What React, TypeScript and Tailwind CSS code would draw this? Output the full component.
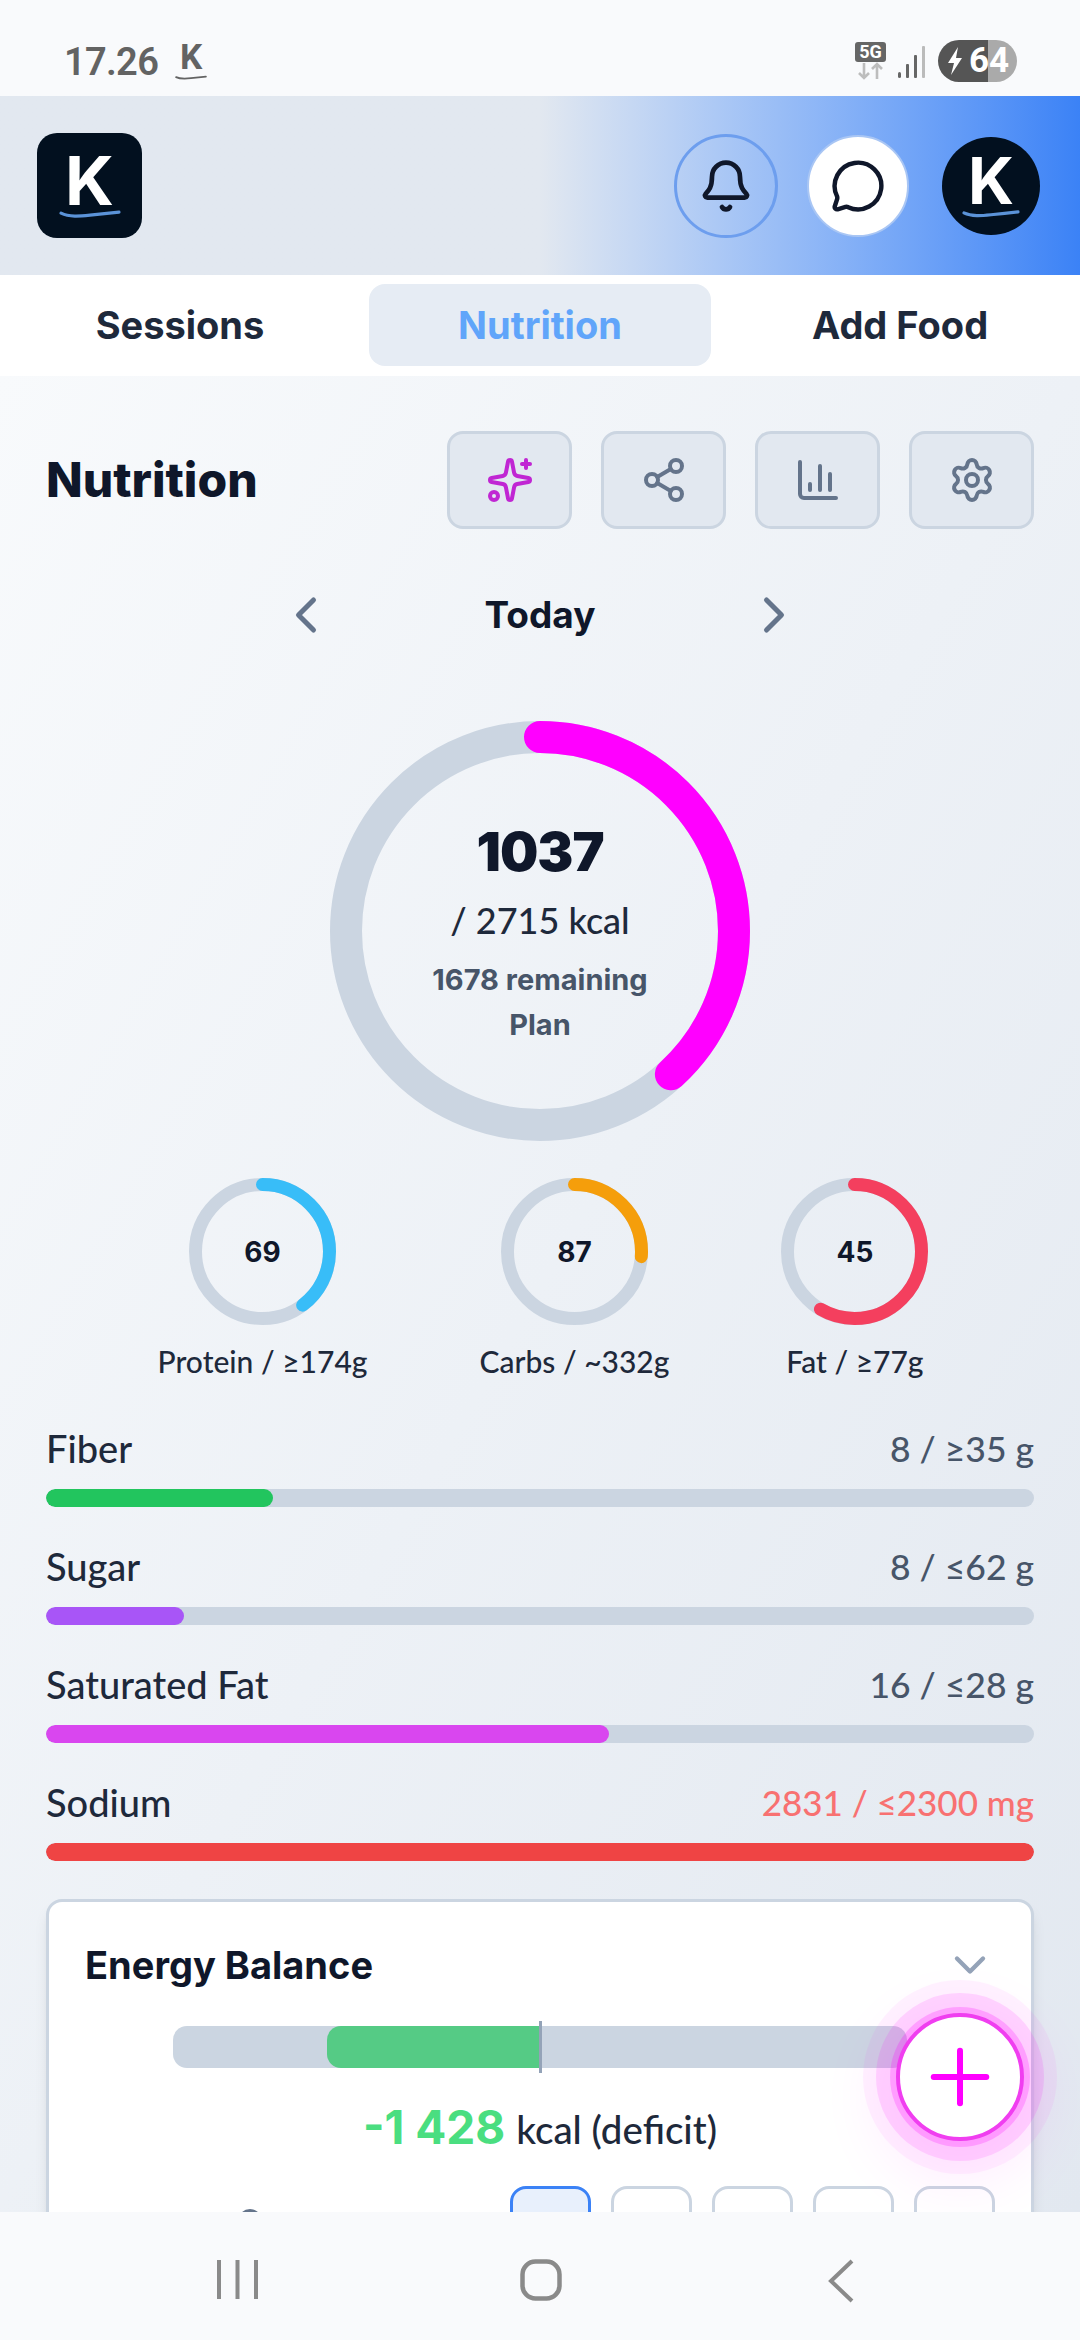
import { Bell, MessageCircle, Sparkles, Share2, ChartColumn, Settings, ChevronLeft, ChevronRight, ChevronDown, Plus } from "lucide-react";

const head = "font-['Inter','Liberation_Sans',sans-serif]";
const body = "font-['Lato','Liberation_Sans',sans-serif]";

function Ring({ size, stroke, value, color }: { size: number; stroke: number; value: number; color: string }) {
  const r = (size - stroke) / 2;
  const c = 2 * Math.PI * r;
  return (
    <svg width={size} height={size} className="absolute inset-0 -rotate-90">
      <circle cx={size / 2} cy={size / 2} r={r} fill="none" stroke="#cbd5e1" strokeWidth={stroke} />
      <circle
        cx={size / 2}
        cy={size / 2}
        r={r}
        fill="none"
        stroke={color}
        strokeWidth={stroke}
        strokeLinecap="round"
        strokeDasharray={`${c * value} ${c}`}
      />
    </svg>
  );
}

function Swoosh({ width, color }: { width: number; color: string }) {
  return (
    <svg width={width} height={width / 6} viewBox="0 0 60 10" className="block">
      <path d="M2 4c8 4 18 3 28 2s18-2 28-3" fill="none" stroke={color} strokeWidth="3.2" strokeLinecap="round" />
    </svg>
  );
}

function Macro({ value, label, pct, color }: { value: number; label: string; pct: number; color: string }) {
  return (
    <div className="flex flex-col items-center">
      <div className="relative w-[147px] h-[147px] flex items-center justify-center">
        <Ring size={147} stroke={13} value={pct} color={color} />
        <span className={`${head} text-[28px] font-bold text-[#0f172a]`}>{value}</span>
      </div>
      <div className={`${body} mt-[18px] h-[36px] leading-[36px] text-[30px] font-medium text-[#1e293b] whitespace-nowrap`}>{label}</div>
    </div>
  );
}

function Bar({ name, value, fill, color, over }: { name: string; value: string; fill: number; color: string; over?: boolean }) {
  return (
    <div className="mb-[43px] last:mb-0">
      <div className={`${body} flex justify-between h-[36px] leading-[33px] font-medium`}>
        <span className="text-[38px] text-[#1e293b]">{name}</span>
        <span className={over ? "text-[35px] text-[#f87171]" : "text-[35.5px] text-[#475569]"}>{value}</span>
      </div>
      <div className="mt-[21px] h-[18px] rounded-full bg-[#cbd5e1] overflow-hidden">
        <div className="h-full rounded-full" style={{ width: fill + "%", backgroundColor: color }} />
      </div>
    </div>
  );
}

export default function App() {
  const tools = [
    { icon: Sparkles, color: "text-[#c026d3]" },
    { icon: Share2, color: "text-[#64748b]" },
    { icon: ChartColumn, color: "text-[#64748b]" },
    { icon: Settings, color: "text-[#64748b]" },
  ];

  return (
    <div className="relative w-[1080px] h-[2340px] flex flex-col overflow-hidden bg-[#f9fafc]">
      {/* status bar */}
      <div className="h-[96px] shrink-0 flex items-start justify-between pl-[64px] pr-[63px] pt-[41px]">
        <div className="flex items-start text-[#636363] font-['Roboto',sans-serif] font-semibold">
          <span className="text-[38px] leading-[42px] tracking-[-0.7px]">17.26</span>
          <div className="ml-[17px] flex flex-col items-center">
            <span className="text-[35px] leading-[34px] font-bold">K</span>
            <Swoosh width={32} color="#636363" />
          </div>
        </div>
        <div className="flex items-center gap-[12px] -mt-[1px]">
          <div className="flex flex-col items-center">
            <span className="w-[31px] h-[20px] rounded-[3px] bg-[#666] text-white text-[18px] leading-[20px] font-bold text-center font-['Roboto',sans-serif]">5G</span>
            <svg width="30" height="18" viewBox="0 0 30 18" fill="none" stroke="#bdbdbd" strokeWidth="2.6">
              <path d="M8 1v15M3 11l5 5 5-5M21 17V2M16 7l5-5 5 5" />
            </svg>
          </div>
          <svg width="28" height="36" viewBox="0 0 28 36" className="mt-[2px]">
            <rect x="0" y="28" width="3" height="6" rx="1.5" fill="#666" />
            <rect x="8" y="20" width="3" height="14" rx="1" fill="#666" />
            <rect x="16" y="11" width="3" height="23" rx="1" fill="#666" />
            <rect x="24" y="2" width="3" height="32" rx="1" fill="#bbb" />
          </svg>
          <div className="relative w-[79px] h-[42px] rounded-full overflow-hidden bg-[linear-gradient(to_right,#555_63%,#aaa_63%)] flex items-center text-white font-bold font-['Roboto',sans-serif]">
            <svg width="18" height="28" viewBox="0 0 18 28" className="ml-[9px]" fill="#fff">
              <path d="M11 0 1 16h6l-3 12 11-17H9z" />
            </svg>
            <span className="ml-[4px] text-[35px] leading-[42px]">64</span>
          </div>
        </div>
      </div>

      {/* header */}
      <div className="h-[179px] shrink-0 flex items-center justify-between pl-[37px] pr-[40px] bg-gradient-to-r from-[#e2e8f0] via-[#e2e8f0] to-[#3b82f6]">
        <div className="w-[105px] h-[105px] rounded-[20px] bg-[#02101f] flex flex-col items-center justify-center">
          <span className="font-['Inter',sans-serif] font-bold text-[68px] leading-[58px] text-white">K</span>
          <Swoosh width={62} color="#5b93d8" />
        </div>
        <div className="flex items-center">
          <div className="w-[104px] h-[104px] rounded-full border-[3px] border-[#6d9eee] flex items-center justify-center text-[#0f172a]">
            <Bell size={56} strokeWidth={2} />
          </div>
          <div className="ml-[29px] w-[102px] h-[102px] rounded-full bg-white border-[2px] border-[#a9c6f4] flex items-center justify-center text-[#0f172a]">
            <MessageCircle size={56} strokeWidth={1.9} />
          </div>
          <div className="ml-[33px] w-[98px] h-[98px] rounded-full bg-[#02101f] flex flex-col items-center justify-center">
            <span className="font-['Inter',sans-serif] font-bold text-[64px] leading-[56px] text-white">K</span>
            <Swoosh width={58} color="#5b93d8" />
          </div>
        </div>
      </div>

      {/* tabs */}
      <div className={`${head} h-[101px] shrink-0 bg-white grid grid-cols-3 gap-[18px] px-[9px] pt-[9px] pb-[10px] text-[38px] font-bold text-center leading-[82px]`}>
        <div className="text-[#1e293b]">Sessions</div>
        <div className="rounded-[16px] bg-[#e6ecf4] text-[#60a5fa]">Nutrition</div>
        <div className="text-[#1e293b]">Add Food</div>
      </div>

      {/* page */}
      <main className="flex-1 min-h-0 overflow-hidden px-[46px] pt-[55px] bg-gradient-to-br from-[#f8fafc] to-[#e2e8f0]">
        <div className="flex items-center justify-between">
          <h1 className={`${head} text-[48px] font-extrabold text-[#0f172a]`}>Nutrition</h1>
          <div className="flex gap-[29px]">
            {tools.map((t, i) => (
              <button key={i} className={`w-[125px] h-[98px] rounded-[16px] bg-[#e2e8f0] border-[3px] border-[#cbd5e1] flex items-center justify-center ${t.color}`}>
                <t.icon size={48} strokeWidth={2} />
              </button>
            ))}
          </div>
        </div>

        <div className="mt-[56px] h-[60px] flex items-center justify-center text-[#64748b]">
          <ChevronLeft size={60} strokeWidth={2} />
          <div className={`${head} w-[408px] text-center text-[37px] leading-[56px] font-bold text-[#0f172a]`}>Today</div>
          <ChevronRight size={60} strokeWidth={2} />
        </div>

        <div className="relative mt-[76px] mx-auto w-[420px] h-[420px] flex flex-col items-center">
          <Ring size={420} stroke={32} value={0.382} color="#ff00ff" />
          <div className={`${head} mt-[96px] text-[54px] leading-[70px] font-black tracking-[-1px] text-[#0f172a]`}>1037</div>
          <div className={`${body} mt-[11px] text-[36px] leading-[44px] font-medium text-[#1e293b]`}>/ 2715 kcal</div>
          <div className={`${head} mt-[18px] text-[29px] leading-[40px] font-bold text-[#475569]`}>1678 remaining</div>
          <div className={`${head} mt-[5px] text-[29px] leading-[40px] font-bold text-[#475569]`}>Plan</div>
        </div>

        <div className="mt-[37px] flex justify-center gap-[112px] pl-[6px]">
          <Macro value={69} label="Protein / ≥174g" pct={0.397} color="#38bdf8" />
          <Macro value={87} label="Carbs / ~332g" pct={0.262} color="#f59e0b" />
          <Macro value={45} label="Fat / ≥77g" pct={0.584} color="#f43f5e" />
        </div>

        <div className="mt-[53px]">
          <Bar name="Fiber" value="8 / ≥35 g" fill={23} color="#22c55e" />
          <Bar name="Sugar" value="8 / ≤62 g" fill={14} color="#a855f7" />
          <Bar name="Saturated Fat" value="16 / ≤28 g" fill={57} color="#d946ef" />
          <Bar name="Sodium" value="2831 / ≤2300 mg" fill={100} color="#ef4444" over />
        </div>

        <section className="mt-[38px] rounded-[16px] bg-white border-[3px] border-[#cbd5e1] shadow-lg px-[36px] pt-[39px] pb-[40px]">
          <div className="flex items-center justify-between h-[48px]">
            <h2 className={`${head} text-[38px] font-bold text-[#0f172a]`}>Energy Balance</h2>
            <ChevronDown size={52} strokeWidth={2} className="text-[#94a3b8] -mr-[1px]" />
          </div>
          <div className="relative mt-[37px] mx-auto w-[734px] h-[42px] rounded-[14px] bg-[#cbd5e1]">
            <div className="absolute left-[154px] top-0 w-[213px] h-full rounded-l-[14px] bg-[#55cb85]" />
            <div className="absolute left-[366px] -top-[5px] w-[3px] h-[52px] bg-[#94a3b8]" />
          </div>
          <div className={`${body} mt-[25px] h-[50px] flex items-baseline justify-center text-[#1e293b] text-[38.5px] font-medium`}>
            <span className={`${head} text-[46px] font-bold text-[#4ade80] mr-[11px]`}>-1 428</span>
            kcal (deficit)
          </div>
          <div className="mt-[43px] flex items-start justify-between">
            <div className="ml-[153px] mt-[23px] w-[24px] h-[24px] rounded-full border-[4px] border-[#64748b]" />
            <div className="flex gap-[20px]">
              <div className="w-[81px] h-[80px] rounded-[16px] bg-[#e8f0fc] border-[3px] border-[#3b82f6]" />
              <div className="w-[81px] h-[80px] rounded-[16px] border-[3px] border-[#cbd5e1]" />
              <div className="w-[81px] h-[80px] rounded-[16px] border-[3px] border-[#cbd5e1]" />
              <div className="w-[81px] h-[80px] rounded-[16px] border-[3px] border-[#cbd5e1]" />
              <div className="w-[81px] h-[80px] rounded-[16px] border-[3px] border-[#cbd5e1]" />
            </div>
          </div>
        </section>
      </main>

      {/* floating add */}
      <button className="absolute left-[896px] top-[2013px] w-[128px] h-[128px] rounded-full bg-white border-[4px] border-[#f03ef0] flex items-center justify-center text-[#ff00ff] shadow-[0_0_0_6px_rgba(255,0,255,0.22),0_0_0_20px_rgba(255,0,255,0.12),0_0_0_33px_rgba(255,0,255,0.05),0_20px_60px_20px_rgba(255,0,255,0.08)]">
        <Plus size={90} strokeWidth={1.6} />
      </button>

      {/* nav bar */}
      <nav className="relative z-10 h-[128px] shrink-0 bg-[#f9fafc] text-[#8a8a8a]">
        <div className="h-full pt-[47px] pl-[217px] pr-[223px] flex items-start justify-between">
          <svg width="42" height="42" viewBox="0 0 42 42" fill="none" stroke="currentColor" strokeWidth="4">
            <path d="M2 1v39M20.5 1v39M39 1v39" />
          </svg>
          <svg width="42" height="42" viewBox="0 0 42 42" fill="none" stroke="currentColor" strokeWidth="4.5" className="-ml-[4px]">
            <rect x="2.5" y="2.5" width="37" height="37" rx="13" />
          </svg>
          <svg width="30" height="44" viewBox="0 0 30 44" fill="none" stroke="currentColor" strokeWidth="4">
            <path d="M25 2 4 22l21 20" />
          </svg>
        </div>
      </nav>
    </div>
  );
}
